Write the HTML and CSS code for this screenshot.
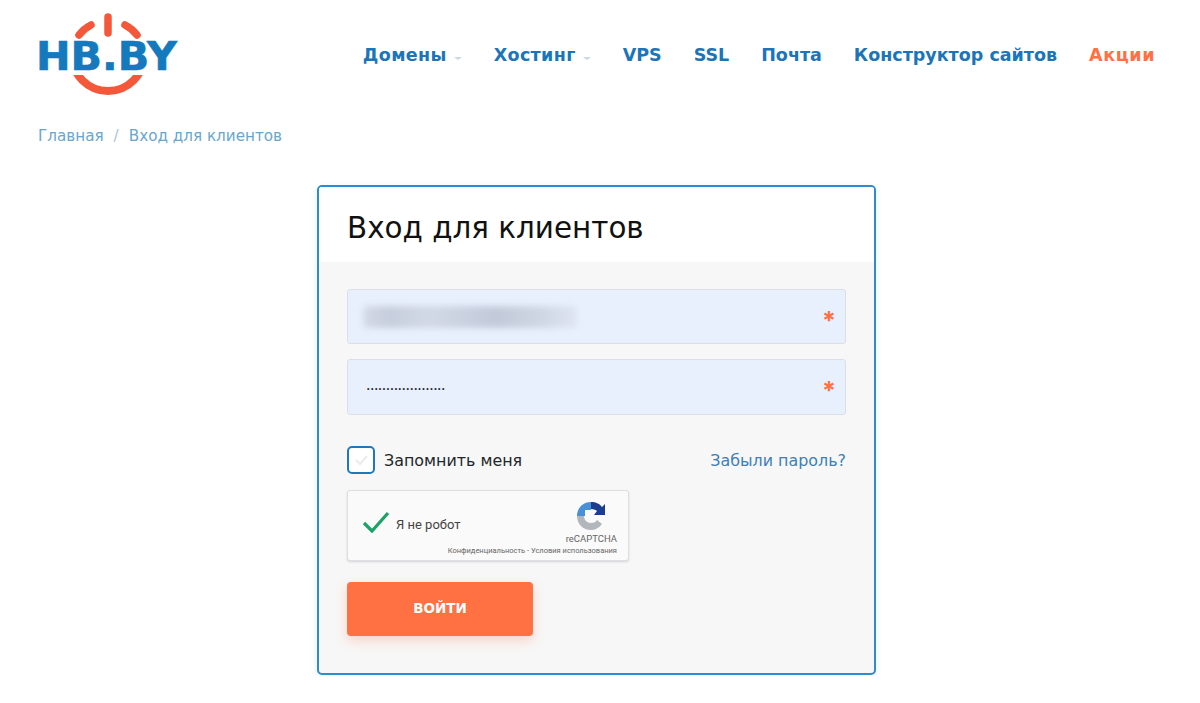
FILE: index.html
```html
<!DOCTYPE html>
<html lang="ru">
<head>
    <meta charset="UTF-8">
    <meta name="viewport" content="width=device-width, initial-scale=1.0">
    <title>Вход для клиентов</title>
    <link rel="stylesheet" href="styles.css">
</head>
<body>
    <header class="site-header">
        <a class="logo" href="#">
            <svg width="145" height="94" viewBox="-3 0 145 94">
                <defs>
                    <clipPath id="logo-under"><rect x="0" y="71" width="142" height="23"/></clipPath>
                </defs>
                <g fill="none" stroke="#f4573a" stroke-width="7.5" stroke-linecap="round">
                    <path d="M70 13V29"/>
                    <path d="M41 31A36 36 0 0 1 53 21"/>
                    <path d="M87 21A36 36 0 0 1 99 31"/>
                </g>
                <circle cx="70" cy="51" r="36" fill="none" stroke="#f4573a" stroke-width="8" clip-path="url(#logo-under)"/>
                <text class="logo-text" x="-2" y="66" textLength="141" lengthAdjust="spacingAndGlyphs">HB.BY</text>
            </svg>
        </a>
        <nav class="main-nav">
            <a href="#" class="has-sub">Домены</a>
            <a href="#" class="has-sub">Хостинг</a>
            <a href="#">VPS</a>
            <a href="#">SSL</a>
            <a href="#">Почта</a>
            <a href="#">Конструктор сайтов</a>
            <a href="#" class="nav-promo">Акции</a>
        </nav>
    </header>

    <div class="breadcrumbs">
        <a href="#">Главная</a>
        <span class="crumb-sep">/</span>
        <a href="#">Вход для клиентов</a>
    </div>

    <main class="login-card">
        <h1>Вход для клиентов</h1>
        <form class="login-form">
            <div class="field">
                <div class="blurred-email"></div>
                <span class="required">*</span>
            </div>
            <div class="field field-password">
                <span class="dots">••••••••••••••••••••</span>
                <span class="required">*</span>
            </div>
            <div class="remember-row">
                <label class="remember">
                    <span class="checkbox">
                        <svg width="18" height="18" viewBox="0 0 18 18"><path d="M4 9l4 4 7-8" fill="none" stroke="#ececec" stroke-width="2"/></svg>
                    </span>
                    Запомнить меня
                </label>
                <a href="#" class="forgot">Забыли пароль?</a>
            </div>
            <div class="captcha">
                <svg class="captcha-check" width="28" height="22" viewBox="0 0 28 22"><path d="M2 12l8 8L26 2" fill="none" stroke="#1aa267" stroke-width="3.2"/></svg>
                <span class="captcha-label">Я не робот</span>
                <div class="captcha-brand">
                    <svg width="30" height="30" viewBox="0 0 30 30">
                        <path d="M15 1V9L9 9 9 15 1 15C1 7 7 1 15 1Z" fill="#4a90d6"/>
                        <path d="M15 1C20 1 24 3 26 6L29 3V14H18L21 10C20 9 18 8 15 8Z" fill="#1c3d8f"/>
                        <path d="M1 15H8C8 19 11 22 15 22C18 22 20 21 21 19L26 23C23 27 19 29 15 29C7 29 1 23 1 15Z" fill="#b2b6bd"/>
                    </svg>
                    <span class="captcha-name">reCAPTCHA</span>
                </div>
                <span class="captcha-links">Конфиденциальность - Условия использования</span>
            </div>
            <button type="button" class="login-btn">ВОЙТИ</button>
        </form>
    </main>
</body>
</html>
```

FILE: styles.css
```css
:root {
    --blue: #1b75b8;
    --orange: #ff7043;
    --field-bg: #e8f0fe;
    --field-border: #dcdfe6;
}

* {
    box-sizing: border-box;
}

body {
    margin: 0;
    background-color: #fff;
    font-family: 'DejaVu Sans', 'Noto Sans', sans-serif;
    color: #1a1a1a;
}

a {
    text-decoration: none;
}

.site-header {
    display: flex;
    justify-content: space-between;
    align-items: flex-start;
    height: 110px;
    padding: 0 45px 0 35px;
}

.logo {
    display: block;
    height: 94px;
    margin-top: 4px;
}

.logo-text {
    font-family: 'DejaVu Sans', sans-serif;
    font-weight: 700;
    font-size: 39px;
    fill: #1479bd;
    stroke: #1479bd;
    stroke-width: 0.6px;
}

.main-nav {
    display: flex;
    gap: 32px;
    margin-top: 44px;
}

.main-nav a {
    font-size: 17.5px;
    line-height: 22px;
    font-weight: 700;
    color: var(--blue);
}

.main-nav .has-sub {
    display: flex;
    align-items: center;
    letter-spacing: 0.35px;
}

.main-nav .has-sub::after {
    content: "";
    width: 0;
    height: 0;
    margin: 6px 0 0 7px;
    border-left: 4px solid transparent;
    border-right: 4px solid transparent;
    border-top: 3px solid #c9d9e6;
}

.main-nav .nav-promo {
    color: var(--orange);
    letter-spacing: 0.6px;
}

.breadcrumbs {
    display: flex;
    gap: 10px;
    padding-left: 38px;
    font-size: 15.2px;
    line-height: 20px;
    margin-top: 16px;
    color: #a9c6da;
}

.breadcrumbs a {
    color: #69a6cd;
}

.login-card {
    width: 559px;
    height: 490px;
    margin: 39px 0 0 317px;
    border: 2px solid #2d8ccb;
    border-radius: 5px;
    background-color: #f7f7f7;
    box-shadow: 0 2px 6px rgba(45, 140, 203, 0.15);
    overflow: hidden;
}

.login-card h1 {
    margin: 0;
    height: 75px;
    padding: 22px 0 0 28px;
    background-color: #fff;
    font-size: 29.4px;
    line-height: 38px;
    font-weight: 400;
    color: #111;
}

.login-form {
    padding: 27px 28px 0;
}

.field {
    position: relative;
    display: flex;
    align-items: center;
    height: 55px;
    width: 499px;
    margin-bottom: 15px;
    padding: 0 9px 0 19px;
    background-color: var(--field-bg);
    border: 1px solid var(--field-border);
    border-radius: 3px;
}

.field-password {
    height: 56px;
}

.blurred-email {
    width: 214px;
    height: 22px;
    margin-left: -4px;
    border-radius: 4px;
    background: linear-gradient(90deg, #d4dae8, #c6cddc 12%, #d2d9e6 30%, #c6cede 55%, #c2cad9 62%, #d0d8e5 85%, #dfe6f2);
    filter: blur(3px);
}

.dots {
    font-size: 7px;
    line-height: 7px;
    color: #222;
    font-family: 'Liberation Sans', sans-serif;
    letter-spacing: 1.5px;
    margin: 3px 0 0 0;
}

.required {
    margin-left: auto;
    color: var(--orange);
    font-family: 'Inter', sans-serif;
    font-size: 25px;
    font-weight: 700;
    line-height: 25px;
    height: 16px;
}

.remember-row {
    display: flex;
    justify-content: space-between;
    align-items: center;
    width: 499px;
    margin-top: 31px;
}

.remember {
    display: flex;
    align-items: center;
    gap: 9px;
    font-size: 15.9px;
    color: #22262a;
}

.checkbox {
    display: flex;
    align-items: center;
    justify-content: center;
    width: 28px;
    height: 28px;
    background-color: #fff;
    border: 2px solid #2178b8;
    border-radius: 5px;
}

.forgot {
    font-size: 15.9px;
    color: #3c80b6;
}

.captcha {
    position: relative;
    width: 282px;
    height: 71px;
    margin-top: 16px;
    background-color: #fafafa;
    border: 1px solid #dfdfdf;
    border-radius: 3px;
    box-shadow: 0 1px 2px rgba(60, 70, 110, 0.2);
    font-family: 'Roboto', sans-serif;
}

.captcha-check {
    position: absolute;
    left: 14px;
    top: 20px;
}

.captcha-label {
    position: absolute;
    left: 48px;
    top: 26px;
    font-size: 13px;
    line-height: 16px;
    color: #444;
}

.captcha-brand {
    position: absolute;
    right: 11px;
    top: 10px;
    display: flex;
    flex-direction: column;
    align-items: center;
}

.captcha-name {
    font-size: 9.5px;
    line-height: 10px;
    margin-top: 3px;
    color: #666;
}

.captcha-links {
    position: absolute;
    right: 11px;
    bottom: 4px;
    font-size: 7.5px;
    line-height: 10px;
    color: #666;
    white-space: nowrap;
}

.login-btn {
    display: block;
    width: 186px;
    height: 54px;
    margin-top: 21px;
    padding-bottom: 4px;
    border: none;
    border-radius: 4px;
    background-color: var(--orange);
    color: #fff;
    font-family: inherit;
    font-size: 13.5px;
    font-weight: 700;
    box-shadow: 0 5px 12px rgba(255, 112, 67, 0.25);
    cursor: pointer;
}
```
